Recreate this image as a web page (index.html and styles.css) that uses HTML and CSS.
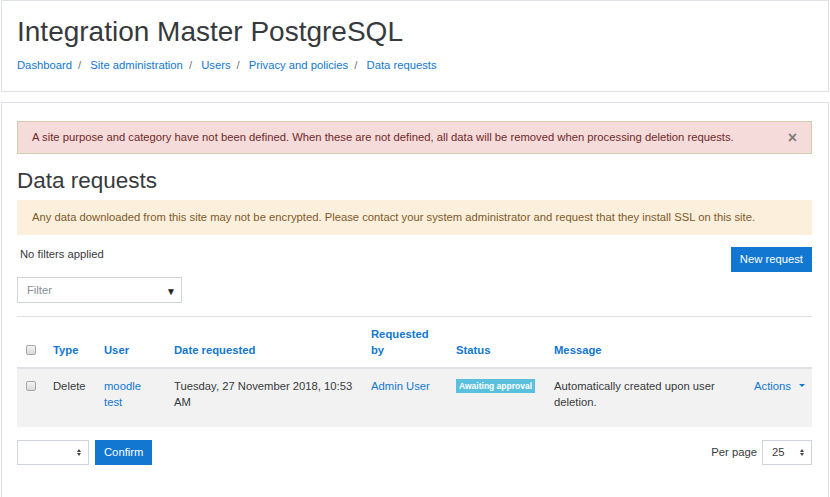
FILE: index.html
```html
<!DOCTYPE html>
<html lang="en">
<head>
<meta charset="utf-8">
<title>Data requests</title>
<link rel="stylesheet" href="styles.css">
</head>
<body>
<div class="page">
  <header class="card header-card">
    <h1 class="site-title">Integration Master PostgreSQL</h1>
    <nav class="breadcrumb">
      <a href="#">Dashboard</a><span class="sep">/</span>
      <a href="#">Site administration</a><span class="sep">/</span>
      <a href="#">Users</a><span class="sep">/</span>
      <a href="#">Privacy and policies</a><span class="sep">/</span>
      <a href="#">Data requests</a>
    </nav>
  </header>

  <main class="card main-card">
    <div class="alert alert-danger">
      <span>A site purpose and category have not been defined. When these are not defined, all data will be removed when processing deletion requests.</span>
      <span class="close">×</span>
    </div>
    <h2 class="page-heading">Data requests</h2>
    <div class="alert alert-warning">Any data downloaded from this site may not be encrypted. Please contact your system administrator and request that they install SSL on this site.</div>

    <div class="toolbar">
      <div class="filters">
        <div class="no-filters">No filters applied</div>
        <div class="filter-select"><span class="placeholder">Filter</span><span class="down">▼</span></div>
      </div>
      <a class="btn btn-primary new-request" href="#">New request</a>
    </div>

    <table class="requests">
      <colgroup>
        <col class="c-check"><col class="c-type"><col class="c-user"><col class="c-date"><col class="c-by"><col class="c-status"><col class="c-msg"><col class="c-actions">
      </colgroup>
      <thead>
        <tr>
          <th><span class="checkbox"></span></th>
          <th><a href="#">Type</a></th>
          <th><a href="#">User</a></th>
          <th><a href="#">Date requested</a></th>
          <th><a href="#">Requested by</a></th>
          <th><a href="#">Status</a></th>
          <th><a href="#">Message</a></th>
          <th></th>
        </tr>
      </thead>
      <tbody>
        <tr>
          <td><span class="checkbox"></span></td>
          <td>Delete</td>
          <td><a href="#">moodle test</a></td>
          <td>Tuesday, 27 November 2018, 10:53 AM</td>
          <td><a href="#">Admin User</a></td>
          <td><span class="badge">Awaiting approval</span></td>
          <td>Automatically created upon user deletion.</td>
          <td><a href="#" class="actions">Actions <span class="caret"></span></a></td>
        </tr>
      </tbody>
    </table>

    <div class="footer-bar">
      <div class="bulk">
        <div class="select small-select"><span></span><span class="updown"><i class="up"></i><i class="dn"></i></span></div>
        <a class="btn btn-primary" href="#">Confirm</a>
      </div>
      <div class="perpage">
        <span class="label">Per page</span>
        <div class="select pp-select"><span>25</span><span class="updown"><i class="up"></i><i class="dn"></i></span></div>
      </div>
    </div>
  </main>
</div>
</body>
</html>
```
FILE: styles.css
```css
* { box-sizing: border-box; }
html, body { margin: 0; padding: 0; background: #fff; }
body {
  font-family: "Liberation Sans", Arial, sans-serif;
  font-size: 11.25px;
  line-height: 1.5;
  color: #373a3c;
  overflow: hidden;
}
a { color: #1177d1; text-decoration: none; }

.page { padding: 0 1px; }
.card { border: 1px solid #dee2e6; background: #fff; }

.header-card { padding: 14px 15px 15px; height: 92px; }
.site-title {
  margin: 0;
  font-size: 28px;
  font-weight: 400;
  line-height: 34px;
  color: #373a3c;
}
.breadcrumb { margin-top: 8px; font-size: 11.25px; line-height: 17px; }
.breadcrumb .sep { color: #6c757d; padding: 0 6px 0 6px; }

.main-card { margin-top: 10px; padding: 18px 16px 40px 15px; height: 410px; border-right: 1px solid #dee2e6; }

.alert { padding: 7px 14px; border: 1px solid transparent; line-height: 17px; }
.alert-danger {
  display: flex; justify-content: space-between; align-items: center;
  background: #f6dbdb;
  border-color: #cfcfae;
  color: #6e2a27;
}
.alert-danger .close { font-size: 16px; color: #7d7d7d; font-weight: 700; padding-right: 0; line-height: 17px; }
.page-heading {
  margin: 13px 0 6px;
  font-size: 22.5px;
  font-weight: 400;
  line-height: 27px;
  color: #373a3c;
}
.alert-warning { background: #fcefdc; color: #7d5a29; padding: 8px 14px 8px; border-color: #fcefdc; }

.toolbar { display: flex; justify-content: space-between; align-items: flex-start; margin-top: 11px; }
.no-filters { padding-left: 3px; line-height: 17px; }
.filter-select {
  margin-top: 14px;
  width: 165px; height: 26px;
  border: 1px solid #ced4da;
  display: flex; align-items: center; justify-content: space-between;
  padding: 0 5px 0 9px;
}
.placeholder { color: #868e96; }
.down { font-size: 10px; color: #222; padding-top: 3px; }

.btn { display: inline-block; line-height: 17px; padding: 4px 9px; font-size: 11.25px; }
.btn-primary { background: #1177d1; color: #fff; }
.new-request { margin-top: 1px; }

.requests { width: 795px; border-collapse: collapse; margin-top: 13px; table-layout: fixed; }
.requests col.c-check { width: 27px; }
.requests col.c-type { width: 51px; }
.requests col.c-user { width: 70px; }
.requests col.c-date { width: 197px; }
.requests col.c-by { width: 85px; }
.requests col.c-status { width: 98px; }
.requests col.c-msg { width: 200px; }
.requests col.c-actions { width: 67px; }
.requests th, .requests td { padding: 9px; text-align: left; vertical-align: top; line-height: 16px; }
.requests th { padding-bottom: 9px; }
.requests thead tr { border-top: 1px solid #dee2e6; border-bottom: 2px solid #dee2e6; }
.requests th { vertical-align: bottom; font-weight: 700; height: 51px; }
.requests tbody tr { background: #f2f2f2; }
.requests td { height: 59px; }
.checkbox {
  display: inline-block; width: 10px; height: 10px;
  border: 1px solid #a8a8a8; border-radius: 2px;
  background: linear-gradient(#f4f4f4, #d9d9d9);
  vertical-align: middle; margin-top: -3px;
}
.badge {
  display: inline-block;
  background: #5bc0de; color: #fff;
  font-size: 8.5px; font-weight: 700;
  line-height: 14px; padding: 0 3px;
  vertical-align: 1px;
}
.actions { white-space: nowrap; }
.caret {
  display: inline-block; width: 0; height: 0;
  border-left: 3px solid transparent; border-right: 3px solid transparent;
  border-top: 3.5px solid #1177d1;
  vertical-align: 3px; margin-left: 5px;
}

.footer-bar { display: flex; justify-content: space-between; align-items: center; margin-top: 13px; }
.bulk { display: flex; gap: 6px; align-items: center; }
.bulk .btn { height: 25px; padding: 4px 9px; }
.select {
  height: 25px; border: 1px solid #ced4da;
  display: flex; align-items: center; justify-content: space-between;
  padding: 0 7px 0 9px;
}
.small-select { width: 72px; }
.pp-select { width: 50px; }
.updown { display: flex; flex-direction: column; gap: 1px; }
.updown i { display: block; width: 0; height: 0; border-left: 2.5px solid transparent; border-right: 2.5px solid transparent; }
.updown .up { border-bottom: 3px solid #444; }
.updown .dn { border-top: 3px solid #444; }
.perpage { display: flex; align-items: center; gap: 5px; }
```
